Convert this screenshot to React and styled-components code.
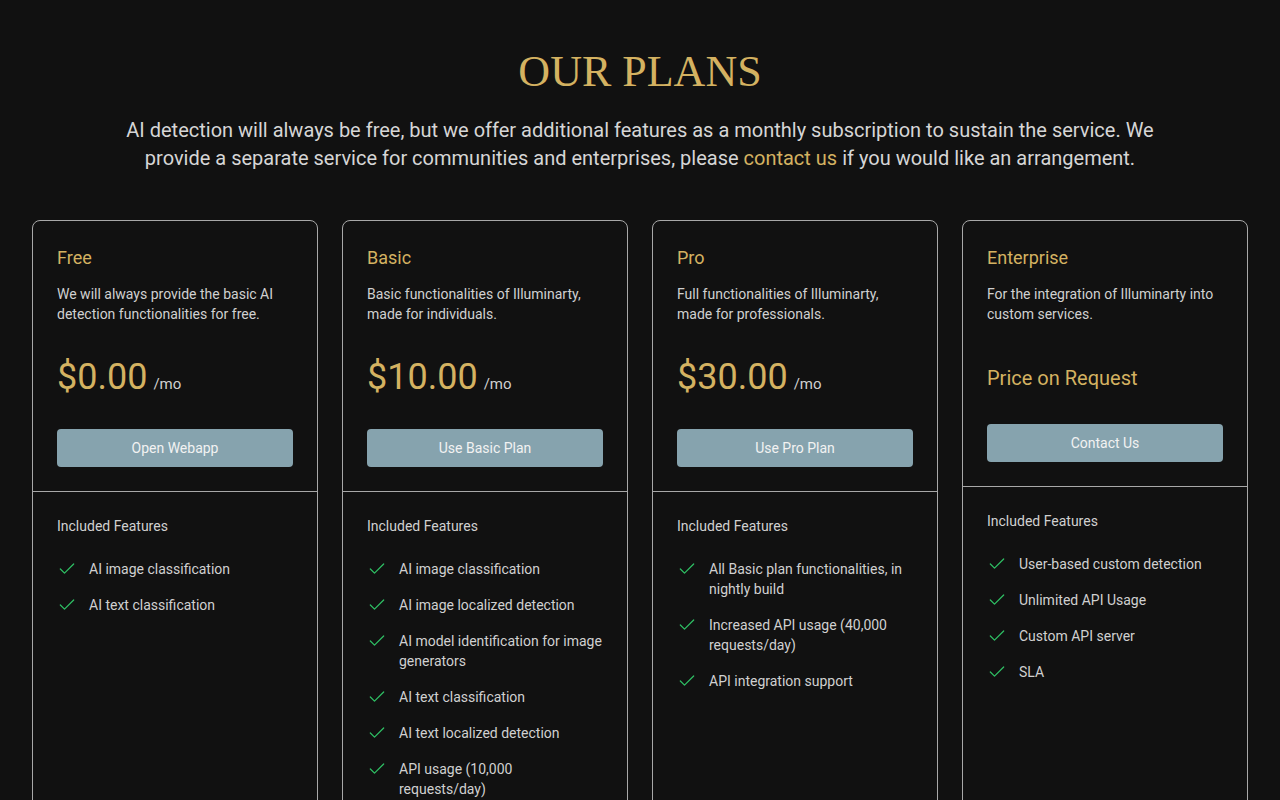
import React from 'react'
import styled, { createGlobalStyle } from 'styled-components'
import { Check } from 'lucide-react'

const GlobalStyle = createGlobalStyle`
  body {
    margin: 0;
    background: #111111;
    color: #d4d4d4;
    font-family: Roboto, "Noto Sans", sans-serif;
  }
`

const plans = [
  {
    name: 'Free',
    desc: 'We will always provide the basic AI detection functionalities for free.',
    price: '$0.00',
    button: 'Open Webapp',
    features: ['AI image classification', 'AI text classification'],
  },
  {
    name: 'Basic',
    desc: 'Basic functionalities of Illuminarty, made for individuals.',
    price: '$10.00',
    button: 'Use Basic Plan',
    features: [
      'AI image classification',
      'AI image localized detection',
      'AI model identification for image\ngenerators',
      'AI text classification',
      'AI text localized detection',
      'API usage (10,000\nrequests/day)',
    ],
  },
  {
    name: 'Pro',
    desc: 'Full functionalities of Illuminarty, made for professionals.',
    price: '$30.00',
    button: 'Use Pro Plan',
    features: [
      'All Basic plan functionalities, in\nnightly build',
      'Increased API usage (40,000\nrequests/day)',
      'API integration support',
    ],
  },
  {
    name: 'Enterprise',
    desc: 'For the integration of Illuminarty into custom services.',
    price: null,
    button: 'Contact Us',
    features: ['User-based custom detection', 'Unlimited API Usage', 'Custom API server', 'SLA'],
  },
]

const App = () => {
  return (
    <Page>
      <GlobalStyle />
      <Heading>OUR PLANS</Heading>
      <Intro>
        AI detection will always be free, but we offer additional features as a monthly
        subscription to sustain the service. We provide a separate service for communities and
        enterprises, please <a href="#contact">contact us</a> if you would like an arrangement.
      </Intro>
      <Grid>
        {plans.map((p) => (
          <Card key={p.name}>
            <Top>
              <PlanName>{p.name}</PlanName>
              <PlanDesc>{p.desc}</PlanDesc>
              {p.price ? (
                <Price>
                  <span className='amount'>{p.price}</span>
                  <span className='unit'>/mo</span>
                </Price>
              ) : (
                <RequestPrice>Price on Request</RequestPrice>
              )}
              <ActionButton>{p.button}</ActionButton>
            </Top>
            <Features>
              <FeaturesTitle>Included Features</FeaturesTitle>
              <FeatureList>
                {p.features.map((f) => (
                  <FeatureItem key={f}>
                    <Check size={20} strokeWidth={1.5} color='#2fbf64' />
                    <span>{f}</span>
                  </FeatureItem>
                ))}
              </FeatureList>
            </Features>
          </Card>
        ))}
      </Grid>
    </Page>
  )
}

export default App

const Page = styled.main`
  padding: 44px 32px 40px;
`

const Heading = styled.h1`
  margin: 0;
  text-align: center;
  font-family: "Liberation Serif", "DejaVu Serif", serif;
  font-weight: 400;
  font-size: 44px;
  line-height: 56px;
  color: #d4b261;
`

const Intro = styled.p`
  max-width: 1040px;
  margin: 16px auto 48px;
  text-align: center;
  font-size: 20px;
  line-height: 28px;
  color: #d6d6d6;

  a {
    color: #d4b261;
    text-decoration: none;
  }
`

const Grid = styled.div`
  display: grid;
  grid-template-columns: repeat(4, 1fr);
  gap: 24px;
  align-items: stretch;
`

const Card = styled.div`
  display: flex;
  flex-direction: column;
  border: 1px solid #a8a8a8;
  border-radius: 8px;
  min-height: 640px;
`

const Top = styled.div`
  display: flex;
  flex-direction: column;
  padding: 23px 24px 24px;
  border-bottom: 1px solid #a8a8a8;
`

const PlanName = styled.h3`
  margin: 0;
  font-size: 18px;
  line-height: 28px;
  font-weight: 400;
  color: #d4b261;
`

const PlanDesc = styled.p`
  margin: 12px 0 0;
  font-size: 14px;
  line-height: 20px;
  color: #d0d0d0;
`

const Price = styled.div`
  display: flex;
  align-items: baseline;
  gap: 6px;
  margin-top: 33px;
  height: 40px;

  .amount {
    font-size: 36px;
    line-height: 40px;
    color: #d4b261;
  }

  .unit {
    font-size: 15px;
    color: #d0d0d0;
  }
`

const RequestPrice = styled.div`
  margin-top: 40px;
  font-size: 20px;
  line-height: 28px;
  color: #d4b261;
`

const ActionButton = styled.button`
  margin-top: 32px;
  height: 38px;
  border: none;
  border-radius: 4px;
  background: #86a3ae;
  color: #f2f2f2;
  font-family: inherit;
  font-size: 14px;
  cursor: pointer;
`

const Features = styled.div`
  flex: 1;
  padding: 24px;
`

const FeaturesTitle = styled.div`
  font-size: 14px;
  line-height: 20px;
  color: #d0d0d0;
`

const FeatureList = styled.ul`
  list-style: none;
  margin: 23px 0 0;
  padding: 0;
  display: flex;
  flex-direction: column;
  gap: 16px;
`

const FeatureItem = styled.li`
  display: flex;
  align-items: flex-start;
  gap: 12px;
  font-size: 14px;
  line-height: 20px;
  color: #d0d0d0;
  white-space: pre-line;

  svg {
    flex-shrink: 0;
  }
`
